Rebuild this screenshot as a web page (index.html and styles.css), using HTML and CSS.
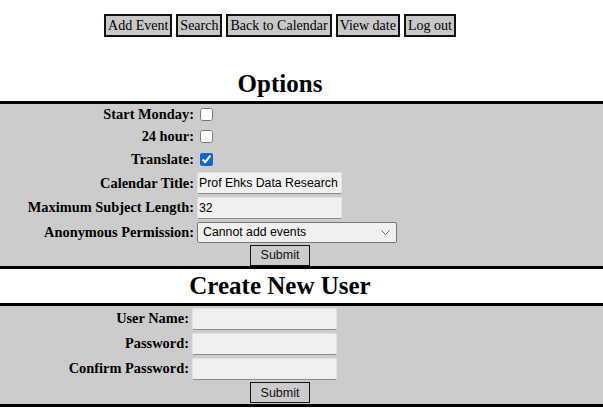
FILE: index.html
```html
<!DOCTYPE html>
<html>
<head>
<meta charset="utf-8">
<title>Options</title>
<link rel="stylesheet" href="styles.css">
</head>
<body>
<div class="nav">
  <a class="navbtn" href="#">Add Event</a>
  <a class="navbtn" href="#">Search</a>
  <a class="navbtn" href="#">Back to Calendar</a>
  <a class="navbtn" href="#">View date</a>
  <a class="navbtn" href="#">Log out</a>
</div>

<h2 class="heading heading-options">Options</h2>
<div class="band">
  <form class="form form-options">
    <label class="lbl">Start Monday:</label>
    <div class="ctl"><input class="chk" type="checkbox"></div>
    <label class="lbl">24 hour:</label>
    <div class="ctl"><input class="chk" type="checkbox"></div>
    <label class="lbl">Translate:</label>
    <div class="ctl"><input class="chk" type="checkbox" checked></div>
    <label class="lbl">Calendar Title:</label>
    <div class="ctl"><input class="txt" type="text" value="Prof Ehks Data Research"></div>
    <label class="lbl">Maximum Subject Length:</label>
    <div class="ctl"><input class="txt" type="text" value="32"></div>
    <label class="lbl">Anonymous Permission:</label>
    <div class="ctl">
      <div class="selwrap">
        <select class="sel"><option>Cannot add events</option></select>
        <svg class="chev" width="9" height="5" viewBox="0 0 9 5"><path d="M0.5 0.5 L4.5 4.5 L8.5 0.5" fill="none" stroke="#6a6a6a" stroke-width="1"/></svg>
      </div>
    </div>
    <div class="submitrow"><button class="submit" type="button">Submit</button></div>
  </form>
</div>

<h2 class="heading heading-user">Create New User</h2>
<div class="band">
  <form class="form form-user">
    <label class="lbl">User Name:</label>
    <div class="ctl"><input class="txt" type="text"></div>
    <label class="lbl">Password:</label>
    <div class="ctl"><input class="txt" type="password"></div>
    <label class="lbl">Confirm Password:</label>
    <div class="ctl"><input class="txt" type="password"></div>
    <div class="submitrow"><button class="submit" type="button">Submit</button></div>
  </form>
</div>
</body>
</html>
```

FILE: styles.css
```css
html, body {
  margin: 0;
  padding: 0;
  background: #ffffff;
}
body {
  font-family: "Liberation Serif", "Times New Roman", serif;
  color: #000;
}
.nav {
  width: 560px;
  padding-top: 14px;
  display: flex;
  justify-content: center;
  gap: 4px;
}
.navbtn {
  display: block;
  font-family: "Liberation Serif", "Times New Roman", serif;
  font-size: 14px;
  line-height: 17px;
  color: #000;
  text-decoration: none;
  background: #c8c8c8;
  border: 2px solid #111;
  padding: 1px 2px;
}
.heading {
  margin: 0;
  width: 560px;
  text-align: center;
  font-size: 25px;
  font-weight: bold;
}
.heading-options {
  margin-top: 30px;
  line-height: 34px;
}
.heading-user {
  line-height: 34px;
}
.band {
  background: #cccccc;
  border-top: 3px solid #000;
  border-bottom: 3px solid #000;
}
.form {
  width: 560px;
  margin: 0;
  display: grid;
  align-items: center;
}
.form-options {
  grid-template-columns: 194px 1fr;
  column-gap: 3px;
  grid-template-rows: 21px 22px 24px 24px 25px 24px 22px;
}
.form-user {
  grid-template-columns: 189px 1fr;
  column-gap: 3px;
  grid-template-rows: 25px 25px 25px 23px;
}
.lbl {
  text-align: right;
  font-weight: bold;
  font-size: 14.4px;
  line-height: 17px;
  white-space: nowrap;
}
.ctl {
  display: flex;
  align-items: center;
}
.chk {
  margin: 0 0 0 3px;
  width: 13px;
  height: 13px;
  accent-color: #1366c9;
}
.txt {
  box-sizing: border-box;
  width: 145px;
  height: 22px;
  margin: 0;
  padding: 0 1px;
  font-family: "Liberation Sans", Arial, sans-serif;
  font-size: 12.3px;
  color: #000;
  background: #f0f0f0;
  border: 1px solid #e2e2e2;
  border-bottom-color: #8a8a8a;
  border-radius: 2px;
  outline: none;
}
.selwrap {
  position: relative;
  width: 200px;
  height: 21px;
}
.sel {
  -webkit-appearance: none;
  appearance: none;
  box-sizing: border-box;
  width: 200px;
  height: 21px;
  margin: 0;
  padding: 0 0 0 5px;
  font-family: "Liberation Sans", Arial, sans-serif;
  font-size: 12.3px;
  color: #000;
  background: #f0f0f0;
  border: 1px solid #767676;
  border-radius: 2px;
}
.chev {
  position: absolute;
  right: 7px;
  top: 8px;
}
.submitrow {
  grid-column: 1 / -1;
  display: flex;
  justify-content: center;
}
.submit {
  box-sizing: border-box;
  width: 60px;
  height: 21px;
  margin: 0;
  padding: 0;
  font-family: "Liberation Sans", Arial, sans-serif;
  font-size: 12.5px;
  color: #111;
  background: #cccccc;
  border: 1px solid #111;
  border-radius: 0;
}
```
